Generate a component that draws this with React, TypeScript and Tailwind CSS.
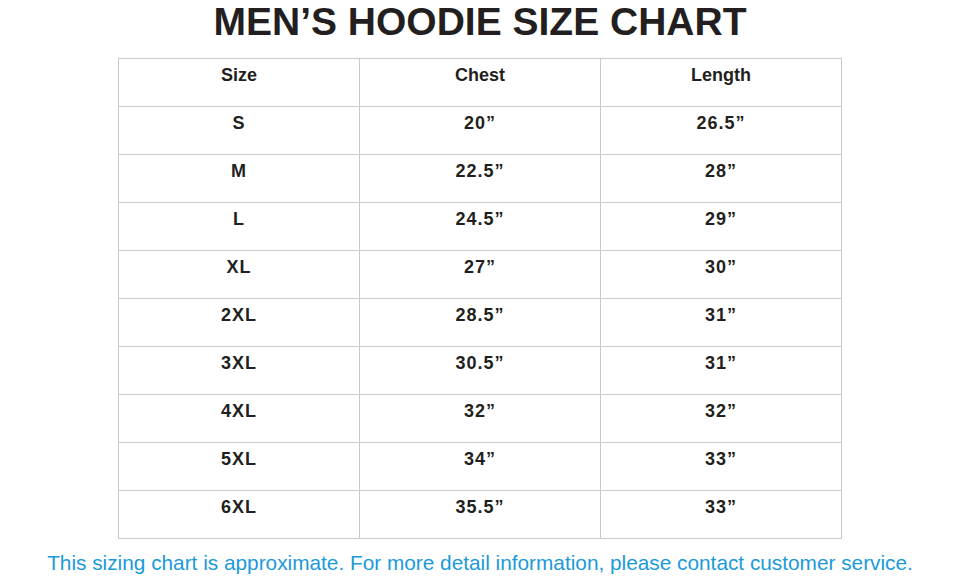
import React from "react";

const rows: [string, string, string][] = [
  ["S", "20”", "26.5”"],
  ["M", "22.5”", "28”"],
  ["L", "24.5”", "29”"],
  ["XL", "27”", "30”"],
  ["2XL", "28.5”", "31”"],
  ["3XL", "30.5”", "31”"],
  ["4XL", "32”", "32”"],
  ["5XL", "34”", "33”"],
  ["6XL", "35.5”", "33”"],
];

const Cell: React.FC<{ children: React.ReactNode; head?: boolean }> = ({ children, head }) => (
  <td
    className={`h-[48px] w-[241px] border border-[#c9c9c9] p-0 pt-[6px] text-center align-top text-[18px] font-bold leading-[20px] text-[#231f20] ${
      head ? "" : "tracking-[1px]"
    }`}
  >
    {children}
  </td>
);

const App: React.FC = () => {
  return (
    <div className="flex h-[582px] w-[960px] flex-col items-center bg-white font-['Liberation_Sans',Arial,sans-serif]">
      <h1 className="mt-[2px] h-[40px] text-[39px] font-bold leading-[40px] text-[#231f20]">
        MEN’S HOODIE SIZE CHART
      </h1>
      <table className="mt-[16px] border-collapse">
        <tbody>
          <tr>
            <Cell head>Size</Cell>
            <Cell head>Chest</Cell>
            <Cell head>Length</Cell>
          </tr>
          {rows.map(([size, chest, length]) => (
            <tr key={size}>
              <Cell>{size}</Cell>
              <Cell>{chest}</Cell>
              <Cell>{length}</Cell>
            </tr>
          ))}
        </tbody>
      </table>
      <p className="mt-[12px] text-[20.8px] leading-[24px] text-[#1b9ad9]">
        This sizing chart is approximate. For more detail information, please contact customer service.
      </p>
    </div>
  );
};

export default App;
